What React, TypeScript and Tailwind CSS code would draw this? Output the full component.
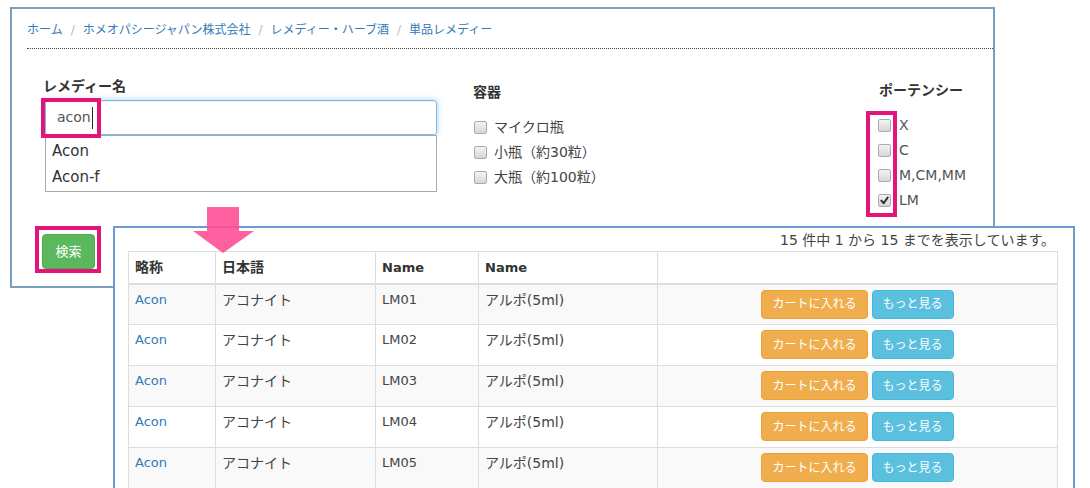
import React from "react";

const Box = ({ checked = false }: { checked?: boolean }) => (
  <span className="w-[13px] h-[13px] shrink-0 rounded-[2px] border border-[#ababab] bg-linear-to-b from-[#f4f4f4] to-[#d6d6d6] flex items-center justify-center">
    {checked && (
      <svg width="9" height="9" viewBox="0 0 9 9">
        <path d="M1.3 4.6 L3.6 7.2 L7.8 1.4" fill="none" stroke="#2b2b2b" strokeWidth="1.9" strokeLinecap="round" strokeLinejoin="round" />
      </svg>
    )}
  </span>
);

const rows = ["LM01", "LM02", "LM03", "LM04", "LM05"];
const td = "border border-[#ddd] align-top px-[6px] py-[6px] leading-[18px]";
const th = "border border-[#ddd] border-b-2 text-left font-bold px-[6px] py-0";

export default function App() {
  return (
    <div className="relative w-[1090px] h-[488px] overflow-hidden bg-white text-[#333] font-['DejaVu_Sans','Noto_Sans_CJK_JP',sans-serif]">
      {/* Panel 1 */}
      <div className="ml-[10px] mt-[7px] w-[985px] h-[281px] border-2 border-[#7b9ebd] flex flex-col">
        <div className="pl-[15px] pt-[12px] text-[12px] leading-[18px] flex">
          <span className="text-[#337ab7]">ホーム</span>
          <span className="px-[8px] text-[#bbb]">/</span>
          <span className="text-[#337ab7]">ホメオパシージャパン株式会社</span>
          <span className="px-[8px] text-[#bbb]">/</span>
          <span className="text-[#337ab7]">レメディー・ハーブ酒</span>
          <span className="px-[8px] text-[#bbb]">/</span>
          <span className="text-[#337ab7]">単品レメディー</span>
        </div>
        <div className="ml-[15px] mt-[9px] border-b border-dotted border-[#444]" />
        <div className="flex mt-[27px]">
          {/* col 1 */}
          <div className="ml-[33px] w-[392px] flex flex-col">
            <div className="-ml-[2px] text-[14px] font-bold leading-[20px]">レメディー名</div>
            <div className="mt-[4px] h-[35px] border border-[#7db8ea] rounded-[3px] shadow-[inset_0_1px_1px_rgba(0,0,0,0.075),0_0_6px_rgba(102,175,233,0.6)] flex items-center pl-[11px] text-[14px] text-[#555]">
              <span>acon</span>
              <span className="ml-[1px] w-px h-[22px] bg-[#222]" />
            </div>
            <div className="border border-[#aaa] bg-white flex flex-col pl-[6px] pt-[2px] pb-[1px] text-[15px] leading-[26px] text-[#333]">
              <div>Acon</div>
              <div>Acon-f</div>
            </div>
            <button className="mt-[42px] -ml-[3px] w-[53px] h-[35px] bg-[#5cb85c] border border-[#4cae4c] rounded-[4px] text-white text-[13px] flex items-center justify-center">
              検索
            </button>
          </div>
          {/* col 2 */}
          <div className="ml-[36px] w-[406px] flex flex-col">
            <div className="mt-[6px] text-[14px] font-bold leading-[20px]">容器</div>
            <div className="mt-[13px] flex flex-col text-[14px] text-[#444]">
              {["マイクロ瓶", "小瓶（約30粒）", "大瓶（約100粒）"].map((t) => (
                <div key={t} className="h-[25px] flex items-center gap-[7px] ml-[1px]">
                  <Box />
                  <span>{t}</span>
                </div>
              ))}
            </div>
          </div>
          {/* col 3 */}
          <div className="flex flex-col">
            <div className="mt-[4px] text-[14px] font-bold leading-[20px]">ポーテンシー</div>
            <div className="mt-[13px] flex flex-col text-[14px] text-[#555]">
              {["X", "C", "M,CM,MM", "LM"].map((t) => (
                <div key={t} className="h-[25px] flex items-center gap-[8px] -ml-[1px]">
                  <Box checked={t === "LM"} />
                  <span>{t}</span>
                </div>
              ))}
            </div>
          </div>
        </div>
      </div>

      {/* Panel 2 */}
      <div className="absolute left-[113px] top-[226px] w-[962px] h-[290px] border-2 border-[#6b9bd1] bg-white">
        <div className="text-right pr-[18px] pt-[3px] text-[14px] leading-[18px] text-[#444]">
          15 件中 1 から 15 までを表示しています。
        </div>
        <table className="ml-[13px] mt-[2px] w-[929px] border-collapse table-fixed text-[13px] text-[#444]">
          <colgroup>
            <col className="w-[87px]" />
            <col className="w-[160px]" />
            <col className="w-[103px]" />
            <col className="w-[179px]" />
            <col className="w-[400px]" />
          </colgroup>
          <thead>
            <tr className="h-[32px] text-[#333]">
              <th className={`${th} text-[14px]`}>略称</th>
              <th className={`${th} text-[14px]`}>日本語</th>
              <th className={th}>Name</th>
              <th className={th}>Name</th>
              <th className="border border-[#ddd] border-b-2 px-[6px] py-0"></th>
            </tr>
          </thead>
          <tbody>
            {rows.map((code, i) => (
              <tr key={code} className={i % 2 === 0 ? "bg-[#f9f9f9] h-[41px]" : "bg-white h-[41px]"}>
                <td className={`${td} text-[#337ab7]`}>Acon</td>
                <td className={`${td} text-[14px]`}>アコナイト</td>
                <td className={td}>{code}</td>
                <td className={`${td} text-[14px]`}>アルポ(5ml)</td>
                <td className="border border-[#ddd] align-top px-[6px] py-[5px]">
                  <div className="flex justify-center gap-[4px]">
                    <span className="h-[29px] px-[10px] flex items-center rounded-[4px] bg-[#f0ad4e] border border-[#eea236] text-white text-[12px]">
                      カートに入れる
                    </span>
                    <span className="h-[29px] px-[10px] flex items-center rounded-[4px] bg-[#5bc0de] border border-[#46b8da] text-white text-[12px]">
                      もっと見る
                    </span>
                  </div>
                </td>
              </tr>
            ))}
          </tbody>
        </table>
      </div>

      {/* Arrow */}
      <svg className="absolute left-[193px] top-[207px]" width="62" height="47" viewBox="0 0 62 47">
        <polygon points="14,0 46,0 46,24 61,24 30,46 0,24 14,24" fill="#ff4a93" fillOpacity="0.88" />
      </svg>

      {/* Highlight boxes */}
      <div className="absolute left-[41px] top-[98px] w-[60px] h-[40px] border-4 border-[#e4157a]" />
      <div className="absolute left-[866px] top-[111px] w-[31px] h-[106px] border-4 border-[#e4157a]" />
      <div className="absolute left-[35px] top-[226px] w-[66px] h-[47px] border-4 border-[#e4157a]" />
    </div>
  );
}
